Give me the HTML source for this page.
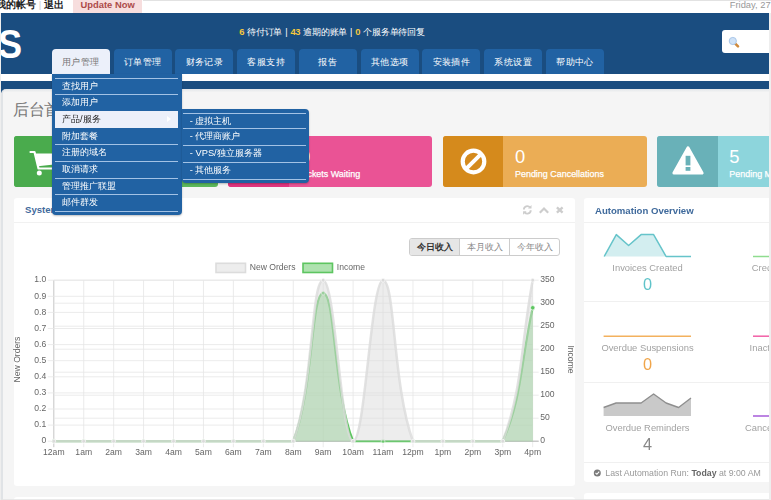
<!DOCTYPE html>
<html><head><meta charset="utf-8"><title>WHMCS</title>
<style>
*{box-sizing:border-box;margin:0;padding:0}
html,body{width:771px;height:500px;overflow:hidden;background:#f5f5f5;font-family:"Liberation Sans",sans-serif;}
#clip{position:absolute;left:0;top:0;width:771px;height:500px;overflow:hidden}
#blur{position:absolute;left:-12px;top:-12px;width:795px;height:524px;background:#f5f5f5;filter:blur(0.4px)}
#page{position:absolute;left:12px;top:12px;width:771px;height:500px;background:#f4f4f4}
.abs{position:absolute}
#topbar{position:absolute;left:0;top:0;width:771px;height:14px;background:#fff;box-shadow:0 -6px 0 6px #fff}
#topbar .acct{position:absolute;left:-4.2px;top:-0.8px;font-size:9.7px;font-weight:bold;color:#222;white-space:nowrap;line-height:12px}
#topbar .acct i{font-style:normal;color:#ccc;font-weight:normal;padding:0 3px}
#upd{position:absolute;left:73px;top:-6px;width:69.2px;height:18.9px;background:#f7dede;color:#ad4b49;font-size:9.4px;font-weight:bold;line-height:8.4px;padding-top:6.9px;text-align:center}
#date{position:absolute;right:0.3px;top:-1.1px;font-size:9.4px;color:#999;line-height:11px;white-space:nowrap}
#header{position:absolute;left:1px;top:13.3px;width:768.4px;height:80px;background:#1a4d80}
#logo{position:absolute;left:-2.1px;top:22px;font-size:41.5px;font-weight:bold;color:#fff;line-height:44px;transform:scaleX(0.87);transform-origin:0 0}
#stats{position:absolute;left:239.2px;top:26px;font-size:9.2px;letter-spacing:-0.25px;word-spacing:0.72px;color:#fff;line-height:12px;white-space:nowrap}
#stats b{color:#f5c83d;font-weight:bold;font-size:9.4px}
#white{position:absolute;left:1px;top:74.2px;width:768.4px;height:7.2px;background:#fff}
.tab{position:absolute;top:48.7px;width:58px;height:25.5px;background:#2162a3;color:#fff;font-size:9.4px;letter-spacing:0.4px;padding-left:0.4px;line-height:25px;text-align:center;border-radius:4px 4px 0 0;white-space:nowrap}
.tab.act{background:#ecf0fa;color:#757575}
#search{position:absolute;left:722px;top:30px;width:50px;height:23px;background:#fff;border-radius:3px}
#menu{position:absolute;left:51.6px;top:74.3px;width:130px;height:141px;background:#2162a3;border-radius:0 0 4px 4px;box-shadow:0 1px 2px rgba(0,0,0,.25);padding:3.9px 3.5px 0 3.5px}
.mi{position:relative;height:16.75px;border-top:1px solid #a3c2e5;color:#fff;font-size:9.3px;line-height:15px;padding-left:7px;white-space:nowrap}
.mi.hov{background:#ecf0fa;color:#222;border-top-color:#ecf0fa}
.mi.hov + .mi{border-top-color:#2162a3}
.mlast{border-top:1px solid #a3c2e5;height:1px}
.arr{position:absolute;right:7px;top:4px;width:0;height:0;border-left:4px solid #fff;border-top:3.5px solid transparent;border-bottom:3.5px solid transparent}
#sub{position:absolute;left:181.8px;top:109px;width:127.3px;height:74px;background:#2162a3;border-radius:0 4px 4px 4px;box-shadow:0 1px 2px rgba(0,0,0,.25);padding:3.7px 3px 0 1.5px}
.si{height:16.45px;border-top:1px solid #a3c2e5;color:#fff;font-size:9.3px;line-height:13.6px;padding-left:6.5px;white-space:nowrap}
#content{position:absolute;left:1px;top:88.8px;width:775px;height:420px;background:linear-gradient(#e3e6e9,#f5f5f5 3.5px,#f5f5f5);border-left:2px solid #e0e3e6;border-radius:5px 0 0 0}
#title{position:absolute;left:13px;top:100.2px;letter-spacing:-0.4px;font-size:16px;color:#777;line-height:20px;white-space:nowrap}
.kpi{position:absolute;top:135.8px;height:50.8px;width:204.3px;border-radius:3px;overflow:hidden}
.kpi .ic{position:absolute;left:0;top:0;width:60.5px;height:100%}
.kpi .num{position:absolute;left:72.3px;top:11.2px;font-size:18.4px;line-height:20px;color:#fff}
.kpi .lbl{-webkit-text-stroke:0.25px #fff;position:absolute;left:72.3px;top:33.6px;font-size:8.95px;line-height:10px;color:#fff;white-space:nowrap}
.panel{position:absolute;background:#fff;border-radius:3px}
.ph{position:absolute;left:0;top:0;right:0;height:25.1px;border-bottom:1px solid #f1f1f1}
.pt{position:absolute;left:11px;top:7px;font-size:9.6px;line-height:12px;color:#3f6a9c;font-weight:bold;white-space:nowrap}
.chart{position:absolute;left:0;top:0}
#btns{position:absolute;left:409.3px;top:237.7px;width:151px;height:18.6px;border:1px solid #ccc;border-radius:3px;background:#fff;overflow:hidden}
#btns div{position:absolute;top:0;height:100%;font-size:9.1px;line-height:16.5px;text-align:center;color:#888;white-space:nowrap}
.ac{position:absolute;text-align:center;white-space:nowrap}
.al{font-size:9.4px;color:#a2a2a2;line-height:12px}
.an{font-size:16.3px;line-height:18px;margin-top:-0.6px}
</style></head><body><div id="clip"><div id="blur"><div id="page">
<div id="topbar"><div class="acct">我的帐号<i>|</i>退出</div><div id="upd">Update Now</div><div id="date">Friday, 27</div></div>
<div id="header"></div><div id="content"></div>
<div id="logo">S</div>
<div id="stats"><b>6</b> 待付订单 | <b>43</b> 逾期的账单 | <b>0</b> 个服务单待回复</div>
<div id="white"></div>
<div class="tab act" style="left:51.7px">用户管理</div><div class="tab" style="left:113.5px">订单管理</div><div class="tab" style="left:175.2px">财务记录</div><div class="tab" style="left:237.0px">客服支持</div><div class="tab" style="left:298.7px">报告</div><div class="tab" style="left:360.5px">其他选项</div><div class="tab" style="left:422.3px">安装插件</div><div class="tab" style="left:484.0px">系统设置</div><div class="tab" style="left:545.8px">帮助中心</div>
<div id="search"><svg width="14" height="14" viewBox="0 0 14 14" style="position:absolute;left:5.5px;top:5.5px"><line x1="7" y1="7.3" x2="10" y2="10.3" stroke="#d08a3c" stroke-width="2.6" stroke-linecap="round"/><circle cx="4.8" cy="5" r="3.6" fill="#cfe2f7" stroke="#a9c6e8" stroke-width="1"/></svg></div>
<div id="title">后台首页</div>

<div class="kpi" style="left:13.7px;background:#5cb85c"><div class="ic" style="background:#4aab4d"></div>
<svg style="position:absolute;left:14.5px;top:13px" width="34" height="28" viewBox="0 0 34 28"><path d="M2.5 3 L6.5 3 L10.5 19.5 L30 19.5" fill="none" stroke="#fff" stroke-width="2.2" stroke-linecap="round" stroke-linejoin="round"/><path d="M7.3 4.5 L31.5 4.5 L30.5 15 L10 17.3 Z" fill="#fff"/><circle cx="11.3" cy="24.1" r="2.5" fill="#fff"/><circle cx="27" cy="24.1" r="2.5" fill="#fff"/></svg></div>
<div class="kpi" style="left:228px;background:#ea5395"><div class="ic" style="background:#e0357f"></div><div class="num">0</div><div class="lbl">Tickets Waiting</div></div>
<div class="kpi" style="left:442.7px;background:#ebad55"><div class="ic" style="background:#d58a1c"></div>
<svg style="position:absolute;left:16px;top:11.5px" width="29" height="29" viewBox="0 0 29 29"><circle cx="14.5" cy="14.5" r="10.8" fill="none" stroke="#fff" stroke-width="4.2"/><line x1="7.3" y1="21.7" x2="21.7" y2="7.3" stroke="#fff" stroke-width="4"/></svg>
<div class="num">0</div><div class="lbl">Pending Cancellations</div></div>
<div class="kpi" style="left:657px;background:#8dd5dc"><div class="ic" style="background:#69b1b8"></div>
<svg style="position:absolute;left:14px;top:9px" width="34" height="32" viewBox="0 0 34 32"><path d="M17 3 L31 28 L3 28 Z" fill="#fff" stroke="#fff" stroke-width="3.2" stroke-linejoin="round"/><rect x="14.6" y="10.8" width="4.8" height="9.6" fill="#69b1b8"/><rect x="14.6" y="22" width="4.8" height="3.8" fill="#69b1b8"/></svg>
<div class="num">5</div><div class="lbl">Pending Module Actions</div></div>

<div class="panel" style="left:14px;top:197.8px;width:560.7px;height:288.4px"><div class="ph"><div class="pt" style="top:6.6px">System Overview</div></div></div>
<svg class="abs" style="left:520px;top:203px" width="48" height="14" viewBox="0 0 48 14" fill="none" stroke="#cdcdcd" stroke-width="1.9"><path d="M3.9 6.6 A3.4 3.4 0 0 1 9.9 4.4 M10.7 7.2 A3.4 3.4 0 0 1 4.7 9.4"/><path d="M8.0 5.6 L11.5 5.6 L11.5 2.1 Z M6.6 8.2 L3.1 8.2 L3.1 11.7 Z" fill="#cdcdcd" stroke="none"/><path d="M19.8 9.7 L24 5.5 L28.2 9.7" stroke-width="2.2"/><path d="M36.9 4.3 L42.6 9.7 M42.6 4.3 L36.9 9.7" stroke-width="2.3"/></svg>
<div id="btns"><div style="left:0;width:50.2px;background:#e6e6e6;color:#333;font-weight:bold;border-right:1px solid #ccc">今日收入</div><div style="left:50.2px;width:49.8px;border-right:1px solid #ccc">本月收入</div><div style="left:100px;width:49px">今年收入</div></div>
<svg class="chart" width="771" height="500" viewBox="0 0 771 500">
<g shape-rendering="auto"><line x1="53.80" y1="280.2" x2="53.80" y2="447.2" stroke="#b8b8b8" stroke-width="0.8"/><line x1="83.73" y1="280.2" x2="83.73" y2="447.2" stroke="#e6e6e6" stroke-width="0.8"/><line x1="113.66" y1="280.2" x2="113.66" y2="447.2" stroke="#e6e6e6" stroke-width="0.8"/><line x1="143.59" y1="280.2" x2="143.59" y2="447.2" stroke="#e6e6e6" stroke-width="0.8"/><line x1="173.53" y1="280.2" x2="173.53" y2="447.2" stroke="#e6e6e6" stroke-width="0.8"/><line x1="203.46" y1="280.2" x2="203.46" y2="447.2" stroke="#e6e6e6" stroke-width="0.8"/><line x1="233.39" y1="280.2" x2="233.39" y2="447.2" stroke="#e6e6e6" stroke-width="0.8"/><line x1="263.32" y1="280.2" x2="263.32" y2="447.2" stroke="#e6e6e6" stroke-width="0.8"/><line x1="293.25" y1="280.2" x2="293.25" y2="447.2" stroke="#e6e6e6" stroke-width="0.8"/><line x1="323.18" y1="280.2" x2="323.18" y2="447.2" stroke="#e6e6e6" stroke-width="0.8"/><line x1="353.11" y1="280.2" x2="353.11" y2="447.2" stroke="#e6e6e6" stroke-width="0.8"/><line x1="383.04" y1="280.2" x2="383.04" y2="447.2" stroke="#e6e6e6" stroke-width="0.8"/><line x1="412.98" y1="280.2" x2="412.98" y2="447.2" stroke="#e6e6e6" stroke-width="0.8"/><line x1="442.91" y1="280.2" x2="442.91" y2="447.2" stroke="#e6e6e6" stroke-width="0.8"/><line x1="472.84" y1="280.2" x2="472.84" y2="447.2" stroke="#e6e6e6" stroke-width="0.8"/><line x1="502.77" y1="280.2" x2="502.77" y2="447.2" stroke="#e6e6e6" stroke-width="0.8"/><line x1="532.70" y1="280.2" x2="532.70" y2="447.2" stroke="#e6e6e6" stroke-width="0.8"/><line x1="47.8" y1="280.20" x2="532.7" y2="280.20" stroke="#e6e6e6" stroke-width="0.8"/><line x1="47.8" y1="296.30" x2="532.7" y2="296.30" stroke="#e6e6e6" stroke-width="0.8"/><line x1="47.8" y1="312.40" x2="532.7" y2="312.40" stroke="#e6e6e6" stroke-width="0.8"/><line x1="47.8" y1="328.50" x2="532.7" y2="328.50" stroke="#e6e6e6" stroke-width="0.8"/><line x1="47.8" y1="344.60" x2="532.7" y2="344.60" stroke="#e6e6e6" stroke-width="0.8"/><line x1="47.8" y1="360.70" x2="532.7" y2="360.70" stroke="#e6e6e6" stroke-width="0.8"/><line x1="47.8" y1="376.80" x2="532.7" y2="376.80" stroke="#e6e6e6" stroke-width="0.8"/><line x1="47.8" y1="392.90" x2="532.7" y2="392.90" stroke="#e6e6e6" stroke-width="0.8"/><line x1="47.8" y1="409.00" x2="532.7" y2="409.00" stroke="#e6e6e6" stroke-width="0.8"/><line x1="47.8" y1="425.10" x2="532.7" y2="425.10" stroke="#e6e6e6" stroke-width="0.8"/><line x1="47.8" y1="441.20" x2="532.7" y2="441.20" stroke="#e6e6e6" stroke-width="0.8"/><line x1="53.8" y1="280.20" x2="538.7" y2="280.20" stroke="#e6e6e6" stroke-width="0.8"/><line x1="53.8" y1="303.20" x2="538.7" y2="303.20" stroke="#e6e6e6" stroke-width="0.8"/><line x1="53.8" y1="326.20" x2="538.7" y2="326.20" stroke="#e6e6e6" stroke-width="0.8"/><line x1="53.8" y1="349.20" x2="538.7" y2="349.20" stroke="#e6e6e6" stroke-width="0.8"/><line x1="53.8" y1="372.20" x2="538.7" y2="372.20" stroke="#e6e6e6" stroke-width="0.8"/><line x1="53.8" y1="395.20" x2="538.7" y2="395.20" stroke="#e6e6e6" stroke-width="0.8"/><line x1="53.8" y1="418.20" x2="538.7" y2="418.20" stroke="#e6e6e6" stroke-width="0.8"/><line x1="53.8" y1="441.20" x2="538.7" y2="441.20" stroke="#e6e6e6" stroke-width="0.8"/><line x1="53.8" y1="441.2" x2="538.7" y2="441.2" stroke="#a8a8a8" stroke-width="0.8"/></g>
<path d="M53.80 441.20 C65.77 441.20 71.76 441.20 83.73 441.20 C95.70 441.20 101.69 441.20 113.66 441.20 C125.63 441.20 131.62 441.20 143.59 441.20 C155.57 441.20 161.55 441.20 173.53 441.20 C185.50 441.20 191.48 441.20 203.46 441.20 C215.43 441.20 221.41 441.20 233.39 441.20 C245.36 441.20 251.35 441.20 263.32 441.20 C275.29 441.20 289.29 441.20 293.25 441.20 C313.24 391.75 311.21 293.08 323.18 293.08 C335.15 293.08 333.13 391.75 353.11 441.20 C357.07 441.20 371.07 441.20 383.04 441.20 C395.02 441.20 401.00 441.20 412.98 441.20 C424.95 441.20 430.93 441.20 442.91 441.20 C454.88 441.20 460.87 441.20 472.84 441.20 C484.81 441.20 498.47 441.20 502.77 441.20 C522.41 397.42 520.73 361.16 532.70 307.80 L532.7 441.2 L53.8 441.2 Z" fill="rgba(93,197,96,0.5)"/>
<path d="M53.80 441.20 C65.77 441.20 71.76 441.20 83.73 441.20 C95.70 441.20 101.69 441.20 113.66 441.20 C125.63 441.20 131.62 441.20 143.59 441.20 C155.57 441.20 161.55 441.20 173.53 441.20 C185.50 441.20 191.48 441.20 203.46 441.20 C215.43 441.20 221.41 441.20 233.39 441.20 C245.36 441.20 251.35 441.20 263.32 441.20 C275.29 441.20 289.29 441.20 293.25 441.20 C313.24 391.75 311.21 293.08 323.18 293.08 C335.15 293.08 333.13 391.75 353.11 441.20 C357.07 441.20 371.07 441.20 383.04 441.20 C395.02 441.20 401.00 441.20 412.98 441.20 C424.95 441.20 430.93 441.20 442.91 441.20 C454.88 441.20 460.87 441.20 472.84 441.20 C484.81 441.20 498.47 441.20 502.77 441.20 C522.41 397.42 520.73 361.16 532.70 307.80" fill="none" stroke="#5dc560" stroke-width="2.2"/>
<circle cx="53.80" cy="441.20" r="1.9" fill="#5dc560" stroke="#fff" stroke-width="0.6"/><circle cx="83.73" cy="441.20" r="1.9" fill="#5dc560" stroke="#fff" stroke-width="0.6"/><circle cx="113.66" cy="441.20" r="1.9" fill="#5dc560" stroke="#fff" stroke-width="0.6"/><circle cx="143.59" cy="441.20" r="1.9" fill="#5dc560" stroke="#fff" stroke-width="0.6"/><circle cx="173.53" cy="441.20" r="1.9" fill="#5dc560" stroke="#fff" stroke-width="0.6"/><circle cx="203.46" cy="441.20" r="1.9" fill="#5dc560" stroke="#fff" stroke-width="0.6"/><circle cx="233.39" cy="441.20" r="1.9" fill="#5dc560" stroke="#fff" stroke-width="0.6"/><circle cx="263.32" cy="441.20" r="1.9" fill="#5dc560" stroke="#fff" stroke-width="0.6"/><circle cx="293.25" cy="441.20" r="1.9" fill="#5dc560" stroke="#fff" stroke-width="0.6"/><circle cx="323.18" cy="293.08" r="1.9" fill="#5dc560" stroke="#fff" stroke-width="0.6"/><circle cx="353.11" cy="441.20" r="1.9" fill="#5dc560" stroke="#fff" stroke-width="0.6"/><circle cx="383.04" cy="441.20" r="1.9" fill="#5dc560" stroke="#fff" stroke-width="0.6"/><circle cx="412.98" cy="441.20" r="1.9" fill="#5dc560" stroke="#fff" stroke-width="0.6"/><circle cx="442.91" cy="441.20" r="1.9" fill="#5dc560" stroke="#fff" stroke-width="0.6"/><circle cx="472.84" cy="441.20" r="1.9" fill="#5dc560" stroke="#fff" stroke-width="0.6"/><circle cx="502.77" cy="441.20" r="1.9" fill="#5dc560" stroke="#fff" stroke-width="0.6"/><circle cx="532.70" cy="307.80" r="1.9" fill="#5dc560" stroke="#fff" stroke-width="0.6"/>
<path d="M53.80 441.20 C65.77 441.20 71.76 441.20 83.73 441.20 C95.70 441.20 101.69 441.20 113.66 441.20 C125.63 441.20 131.62 441.20 143.59 441.20 C155.57 441.20 161.55 441.20 173.53 441.20 C185.50 441.20 191.48 441.20 203.46 441.20 C215.43 441.20 221.41 441.20 233.39 441.20 C245.36 441.20 251.35 441.20 263.32 441.20 C275.29 441.20 289.55 441.20 293.25 441.20 C313.49 386.75 311.21 280.20 323.18 280.20 C335.15 280.20 341.14 441.20 353.11 441.20 C365.09 441.20 371.07 280.20 383.04 280.20 C395.02 280.20 392.73 386.75 412.98 441.20 C416.68 441.20 430.93 441.20 442.91 441.20 C454.88 441.20 460.87 441.20 472.84 441.20 C484.81 441.20 499.07 441.20 502.77 441.20 C523.01 386.75 520.73 344.60 532.70 280.20 L532.7 441.2 L53.8 441.2 Z" fill="rgba(220,220,220,0.5)"/>
<path d="M53.80 441.20 C65.77 441.20 71.76 441.20 83.73 441.20 C95.70 441.20 101.69 441.20 113.66 441.20 C125.63 441.20 131.62 441.20 143.59 441.20 C155.57 441.20 161.55 441.20 173.53 441.20 C185.50 441.20 191.48 441.20 203.46 441.20 C215.43 441.20 221.41 441.20 233.39 441.20 C245.36 441.20 251.35 441.20 263.32 441.20 C275.29 441.20 289.55 441.20 293.25 441.20 C313.49 386.75 311.21 280.20 323.18 280.20 C335.15 280.20 341.14 441.20 353.11 441.20 C365.09 441.20 371.07 280.20 383.04 280.20 C395.02 280.20 392.73 386.75 412.98 441.20 C416.68 441.20 430.93 441.20 442.91 441.20 C454.88 441.20 460.87 441.20 472.84 441.20 C484.81 441.20 499.07 441.20 502.77 441.20 C523.01 386.75 520.73 344.60 532.70 280.20" fill="none" stroke="#dcdcdc" stroke-opacity="0.82" stroke-width="2.5"/>
<circle cx="53.80" cy="441.20" r="1.9" fill="#dadada" stroke="#fff" stroke-width="0.6"/><circle cx="83.73" cy="441.20" r="1.9" fill="#dadada" stroke="#fff" stroke-width="0.6"/><circle cx="113.66" cy="441.20" r="1.9" fill="#dadada" stroke="#fff" stroke-width="0.6"/><circle cx="143.59" cy="441.20" r="1.9" fill="#dadada" stroke="#fff" stroke-width="0.6"/><circle cx="173.53" cy="441.20" r="1.9" fill="#dadada" stroke="#fff" stroke-width="0.6"/><circle cx="203.46" cy="441.20" r="1.9" fill="#dadada" stroke="#fff" stroke-width="0.6"/><circle cx="233.39" cy="441.20" r="1.9" fill="#dadada" stroke="#fff" stroke-width="0.6"/><circle cx="263.32" cy="441.20" r="1.9" fill="#dadada" stroke="#fff" stroke-width="0.6"/><circle cx="293.25" cy="441.20" r="1.9" fill="#dadada" stroke="#fff" stroke-width="0.6"/><circle cx="323.18" cy="280.20" r="1.9" fill="#dadada" stroke="#fff" stroke-width="0.6"/><circle cx="353.11" cy="441.20" r="1.9" fill="#dadada" stroke="#fff" stroke-width="0.6"/><circle cx="383.04" cy="280.20" r="1.9" fill="#dadada" stroke="#fff" stroke-width="0.6"/><circle cx="412.98" cy="441.20" r="1.9" fill="#dadada" stroke="#fff" stroke-width="0.6"/><circle cx="442.91" cy="441.20" r="1.9" fill="#dadada" stroke="#fff" stroke-width="0.6"/><circle cx="472.84" cy="441.20" r="1.9" fill="#dadada" stroke="#fff" stroke-width="0.6"/><circle cx="502.77" cy="441.20" r="1.9" fill="#dadada" stroke="#fff" stroke-width="0.6"/><circle cx="532.70" cy="280.20" r="1.9" fill="#dadada" stroke="#fff" stroke-width="0.6"/><circle cx="532.70" cy="307.80" r="2.2" fill="#5dc560" stroke="#fff" stroke-width="0.6"/>
<g font-family="Liberation Sans, sans-serif" font-size="8.6" fill="#666"><text x="53.80" y="455.3" text-anchor="middle">12am</text><text x="83.73" y="455.3" text-anchor="middle">1am</text><text x="113.66" y="455.3" text-anchor="middle">2am</text><text x="143.59" y="455.3" text-anchor="middle">3am</text><text x="173.53" y="455.3" text-anchor="middle">4am</text><text x="203.46" y="455.3" text-anchor="middle">5am</text><text x="233.39" y="455.3" text-anchor="middle">6am</text><text x="263.32" y="455.3" text-anchor="middle">7am</text><text x="293.25" y="455.3" text-anchor="middle">8am</text><text x="323.18" y="455.3" text-anchor="middle">9am</text><text x="353.11" y="455.3" text-anchor="middle">10am</text><text x="383.04" y="455.3" text-anchor="middle">11am</text><text x="412.98" y="455.3" text-anchor="middle">12pm</text><text x="442.91" y="455.3" text-anchor="middle">1pm</text><text x="472.84" y="455.3" text-anchor="middle">2pm</text><text x="502.77" y="455.3" text-anchor="middle">3pm</text><text x="532.70" y="455.3" text-anchor="middle">4pm</text><text x="46.3" y="282.40" text-anchor="end">1.0</text><text x="46.3" y="298.50" text-anchor="end">0.9</text><text x="46.3" y="314.60" text-anchor="end">0.8</text><text x="46.3" y="330.70" text-anchor="end">0.7</text><text x="46.3" y="346.80" text-anchor="end">0.6</text><text x="46.3" y="362.90" text-anchor="end">0.5</text><text x="46.3" y="379.00" text-anchor="end">0.4</text><text x="46.3" y="395.10" text-anchor="end">0.3</text><text x="46.3" y="411.20" text-anchor="end">0.2</text><text x="46.3" y="427.30" text-anchor="end">0.1</text><text x="46.3" y="443.40" text-anchor="end">0</text><text x="540.3" y="282.40">350</text><text x="540.3" y="305.40">300</text><text x="540.3" y="328.40">250</text><text x="540.3" y="351.40">200</text><text x="540.3" y="374.40">150</text><text x="540.3" y="397.40">100</text><text x="540.3" y="420.40">50</text><text x="540.3" y="443.40">0</text>
<text transform="translate(20.3,359.5) rotate(-90)" text-anchor="middle">New Orders</text>
<text transform="translate(568,359.5) rotate(90)" text-anchor="middle">Income</text>
<rect x="216" y="263.3" width="29.5" height="9.2" fill="#ededed" stroke="#dcdcdc" stroke-width="1.6"/>
<text x="249.7" y="270.3">New Orders</text>
<rect x="303" y="263.3" width="29.5" height="9.2" fill="#aee2af" stroke="#5dc560" stroke-width="1.6"/>
<text x="336.8" y="270.3">Income</text>
</g>
</svg>

<div class="panel" style="left:584px;top:197.8px;width:200px;height:284.5px"><div class="ph"><div class="pt">Automation Overview</div></div>
<div class="abs" style="left:0;right:0;top:103.5px;height:1px;background:#f0f0f0"></div>
<div class="abs" style="left:0;right:0;top:184.5px;height:1px;background:#f0f0f0"></div>
<div class="abs" style="left:0;right:0;top:264.3px;height:1px;background:#f0f0f0"></div>
</div>
<svg class="abs" style="left:0;top:0" width="771" height="500" viewBox="0 0 771 500">
<path d="M604.2 256.5 L616.3 234.6 L628.6 245.5 L641.1 234.6 L653.6 234.6 L666.1 256.5 L691 256.5" fill="#d3eef0" stroke="none"/>
<path d="M604.2 256.5 L616.3 234.6 L628.6 245.5 L641.1 234.6 L653.6 234.6 L666.1 256.5 L691 256.5" fill="none" stroke="#66c4ca" stroke-width="1.5" stroke-linejoin="round"/>
<line x1="753" y1="256.5" x2="771" y2="256.5" stroke="#8fdc8f" stroke-width="1.5"/>
<line x1="603.6" y1="336.2" x2="691" y2="336.2" stroke="#f3b15e" stroke-width="1.5"/>
<line x1="753" y1="336.2" x2="771" y2="336.2" stroke="#f25fa6" stroke-width="1.5"/>
<path d="M603.6 416 L603.6 407.5 L616.1 403 L628.6 403 L641.1 403 L653.6 394 L666.1 403 L678.6 407.5 L691 398 L691 416 Z" fill="#c9c9c9"/>
<path d="M603.6 407.5 L616.1 403 L628.6 403 L641.1 403 L653.6 394 L666.1 403 L678.6 407.5 L691 398" fill="none" stroke="#8f8f8f" stroke-width="1.4" stroke-linejoin="round"/>
<line x1="753" y1="416" x2="771" y2="416" stroke="#a65bd8" stroke-width="1.5"/>
<circle cx="597.3" cy="472.9" r="3.5" fill="#7a7a7a"/><path d="M595.5 472.9 L596.9 474.3 L599.2 471.7" fill="none" stroke="#fff" stroke-width="1.1"/>
</svg>
<div class="ac al" style="left:597.5px;width:100px;top:261.5px">Invoices Created</div>
<div class="ac an" style="left:597.5px;width:100px;top:275.5px;color:#5fc3c9">0</div>
<div class="ac al" style="left:751.8px;top:261.5px;text-align:left">Credit Card</div>
<div class="ac al" style="left:597.5px;width:100px;top:341.7px">Overdue Suspensions</div>
<div class="ac an" style="left:597.5px;width:100px;top:355.8px;color:#f0a54a">0</div>
<div class="ac al" style="left:749.6px;top:341.7px;text-align:left">Inactive</div>
<div class="ac al" style="left:597.5px;width:100px;top:421.6px">Overdue Reminders</div>
<div class="ac an" style="left:597.5px;width:100px;top:436px;color:#888">4</div>
<div class="ac al" style="left:745px;top:421.6px;text-align:left">Cancellation</div>
<div class="abs" style="left:605.3px;top:467px;font-size:8.76px;line-height:12px;color:#999;white-space:nowrap">Last Automation Run: <b style="color:#666">Today</b> at 9:00 AM</div>
<div class="panel" style="left:584px;top:493px;width:200px;height:20px"></div>
<div class="panel" style="left:14px;top:497.3px;width:560.7px;height:10px"></div><div class="abs" style="left:-12px;top:499px;width:795px;height:13px;background:#e4e4e4;opacity:.8"></div>

<div id="menu"><div class="mi" style="height:15.6px">查找用户</div><div class="mi" style="height:17.3px">添加用户</div><div class="mi hov" style="height:16.5px">产品/服务<span class="arr"></span></div><div class="mi" style="height:16.8px">附加套餐</div><div class="mi" style="height:16.8px">注册的域名</div><div class="mi" style="height:16.8px">取消请求</div><div class="mi" style="height:16.2px">管理推广联盟</div><div class="mi" style="height:17.3px">邮件群发</div><div class="mlast"></div></div>
<div id="sub"><div class="si" style="height:15.5px;line-height:14.8px">- 虚拟主机</div><div class="si" style="height:16.6px;line-height:14.8px">- 代理商账户</div><div class="si" style="height:17.0px;line-height:14.8px">- VPS/独立服务器</div><div class="si" style="height:16.9px;line-height:14.8px">- 其他服务</div><div class="mlast"></div></div>
<div class="abs" style="left:769.4px;top:13.3px;width:14px;height:499px;background:#eee"></div>
<div class="abs" style="left:-12px;top:13.3px;width:13px;height:499px;background:#eee"></div><div class="abs" style="left:142.5px;top:0;width:629px;height:0.8px;background:#e2e2e2"></div>
</div></div></div></body></html>
